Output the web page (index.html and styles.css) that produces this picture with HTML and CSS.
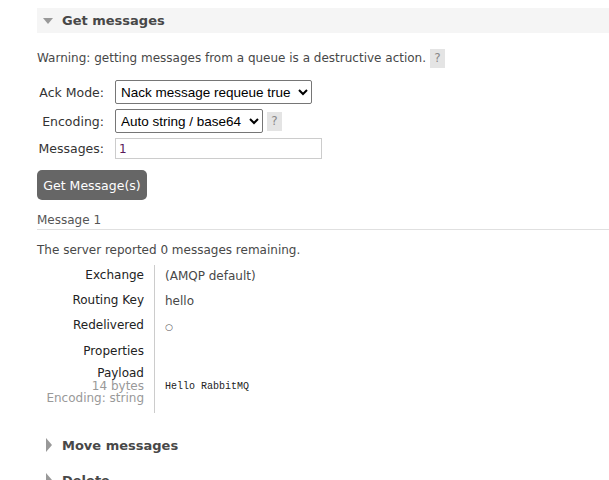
FILE: index.html
```html
<!DOCTYPE html>
<html>
<head>
<meta charset="utf-8">
<link rel="stylesheet" href="styles.css">
</head>
<body>
<div class="page">
  <div class="section open">
    <h2 class="section-head"><span class="tri tri-down"></span>Get messages</h2>
    <div class="section-body">
      <p class="warn">Warning: getting messages from a queue is a destructive action. <span class="help">?</span></p>
      <div class="form">
        <div class="frow">
          <label class="flabel">Ack Mode:</label>
          <div class="fval"><select class="sel sel-ack"><option>Nack message requeue true</option></select></div>
        </div>
        <div class="frow">
          <label class="flabel">Encoding:</label>
          <div class="fval"><select class="sel sel-enc"><option>Auto string / base64</option></select><span class="help">?</span></div>
        </div>
        <div class="frow">
          <label class="flabel">Messages:</label>
          <div class="fval"><input class="txt" type="text" value="1"></div>
        </div>
      </div>
      <button class="btn">Get Message(s)</button>
      <h3 class="msg-title">Message 1</h3>
      <p class="remaining">The server reported 0 messages remaining.</p>
      <div class="facts">
        <div class="fk">Exchange</div><div class="fv">(AMQP default)</div>
        <div class="fk">Routing Key</div><div class="fv">hello</div>
        <div class="fk">Redelivered</div><div class="fv"><span class="circ">○</span></div>
        <div class="fk">Properties</div><div class="fv"></div>
        <div class="fk fk-pay">Payload<div class="sub">14 bytes</div><div class="sub">Encoding: string</div></div>
        <div class="fv fv-pay"><pre class="payload">Hello RabbitMQ</pre></div>
      </div>
    </div>
  </div>
  <div class="section">
    <h2 class="section-head closed"><span class="tri tri-right"></span>Move messages</h2>
  </div>
  <div class="section">
    <h2 class="section-head closed"><span class="tri tri-right"></span>Delete</h2>
  </div>
</div>
</body>
</html>
```
FILE: styles.css
```css
html, body {
  margin: 0;
  padding: 0;
  background: #fff;
}
body {
  font-family: "DejaVu Sans", Verdana, sans-serif;
  font-size: 12px;
  color: #484848;
}
.page {
  padding: 8px 0 0 37px;
}
.section + .section {
  margin-top: 10px;
}
.section-head {
  margin: 0;
  height: 25px;
  display: flex;
  align-items: center;
  background: #f5f5f5;
  font-size: 13px;
  font-weight: bold;
  color: #484848;
  padding-left: 6px;
}
.section-head.closed {
  background: transparent;
}
.tri {
  display: inline-block;
  width: 0;
  height: 0;
  margin-right: 9px;
}
.tri-down {
  border-left: 5px solid transparent;
  border-right: 5px solid transparent;
  border-top: 6px solid #999;
}
.tri-right {
  border-top: 7px solid transparent;
  border-bottom: 7px solid transparent;
  border-left: 6px solid #999;
  margin-left: 3px;
  margin-right: 10px;
}
.section-body {
  padding-top: 16px;
  padding-bottom: 10px;
}
.warn {
  margin: 0;
  display: flex;
  align-items: center;
  gap: 4px;
  height: 18px;
}
.help {
  display: inline-flex;
  align-items: center;
  justify-content: center;
  width: 15px;
  height: 19px;
  background: #e4e4e4;
  color: #888;
  font-size: 12px;
}
.form {
  margin-top: 13px;
  display: flex;
  flex-direction: column;
  gap: 5px;
}
.frow {
  display: flex;
  align-items: center;
}
.flabel {
  width: 67px;
  text-align: right;
  padding-right: 11px;
  color: #333;
  font-size: 12.5px;
}
.fval {
  display: flex;
  align-items: center;
  gap: 4px;
}
.sel {
  font-family: "Liberation Sans", Arial, sans-serif;
  font-size: 13.5px;
  color: #000;
  height: 24px;
  border: 1px solid #767676;
  border-radius: 2px;
  background: #fff;
  padding: 0 1px;
}
.sel-ack { width: 197px; }
.sel-enc { width: 148px; }
.txt {
  width: 207px;
  height: 21px;
  box-sizing: border-box;
  border: 1px solid #ccc;
  font-family: "DejaVu Sans", Verdana, sans-serif;
  font-size: 12px;
  color: #5a1a5a;
  padding: 0 3px;
  outline: none;
}
.btn {
  margin-top: 11px;
  display: block;
  width: 110px;
  height: 30px;
  background: #666;
  color: #fff;
  border: none;
  border-radius: 5px;
  font-family: "DejaVu Sans", Verdana, sans-serif;
  font-size: 12.5px;
  padding: 0;
}
.msg-title {
  margin: 13px 0 0;
  font-weight: normal;
  font-size: 12px;
  color: #555;
  padding-bottom: 2px;
  border-bottom: 1px solid #e0e0e0;
}
.remaining {
  margin: 13px 0 0;
}
.facts {
  margin-top: 8px;
  display: grid;
  grid-template-columns: 118px 1fr;
}
.fk {
  text-align: right;
  padding: 2px 10px 6px 0;
  border-right: 1px solid #ccc;
  color: #222;
  line-height: 16px;
}
.fv {
  padding: 3px 0 6px 10px;
  line-height: 16px;
}
.circ {
  font-size: 9px;
  color: #555;
}
.fk-pay {
  padding-top: 2px;
  padding-bottom: 8px;
  line-height: 12.5px;
}
.sub {
  color: #999;
  line-height: 12.5px;
}
.fv-pay {
  display: flex;
  align-items: center;
}
.payload {
  margin: 0;
  font-family: "Liberation Mono", "DejaVu Sans Mono", monospace;
  font-size: 10px;
  color: #222;
}
```
